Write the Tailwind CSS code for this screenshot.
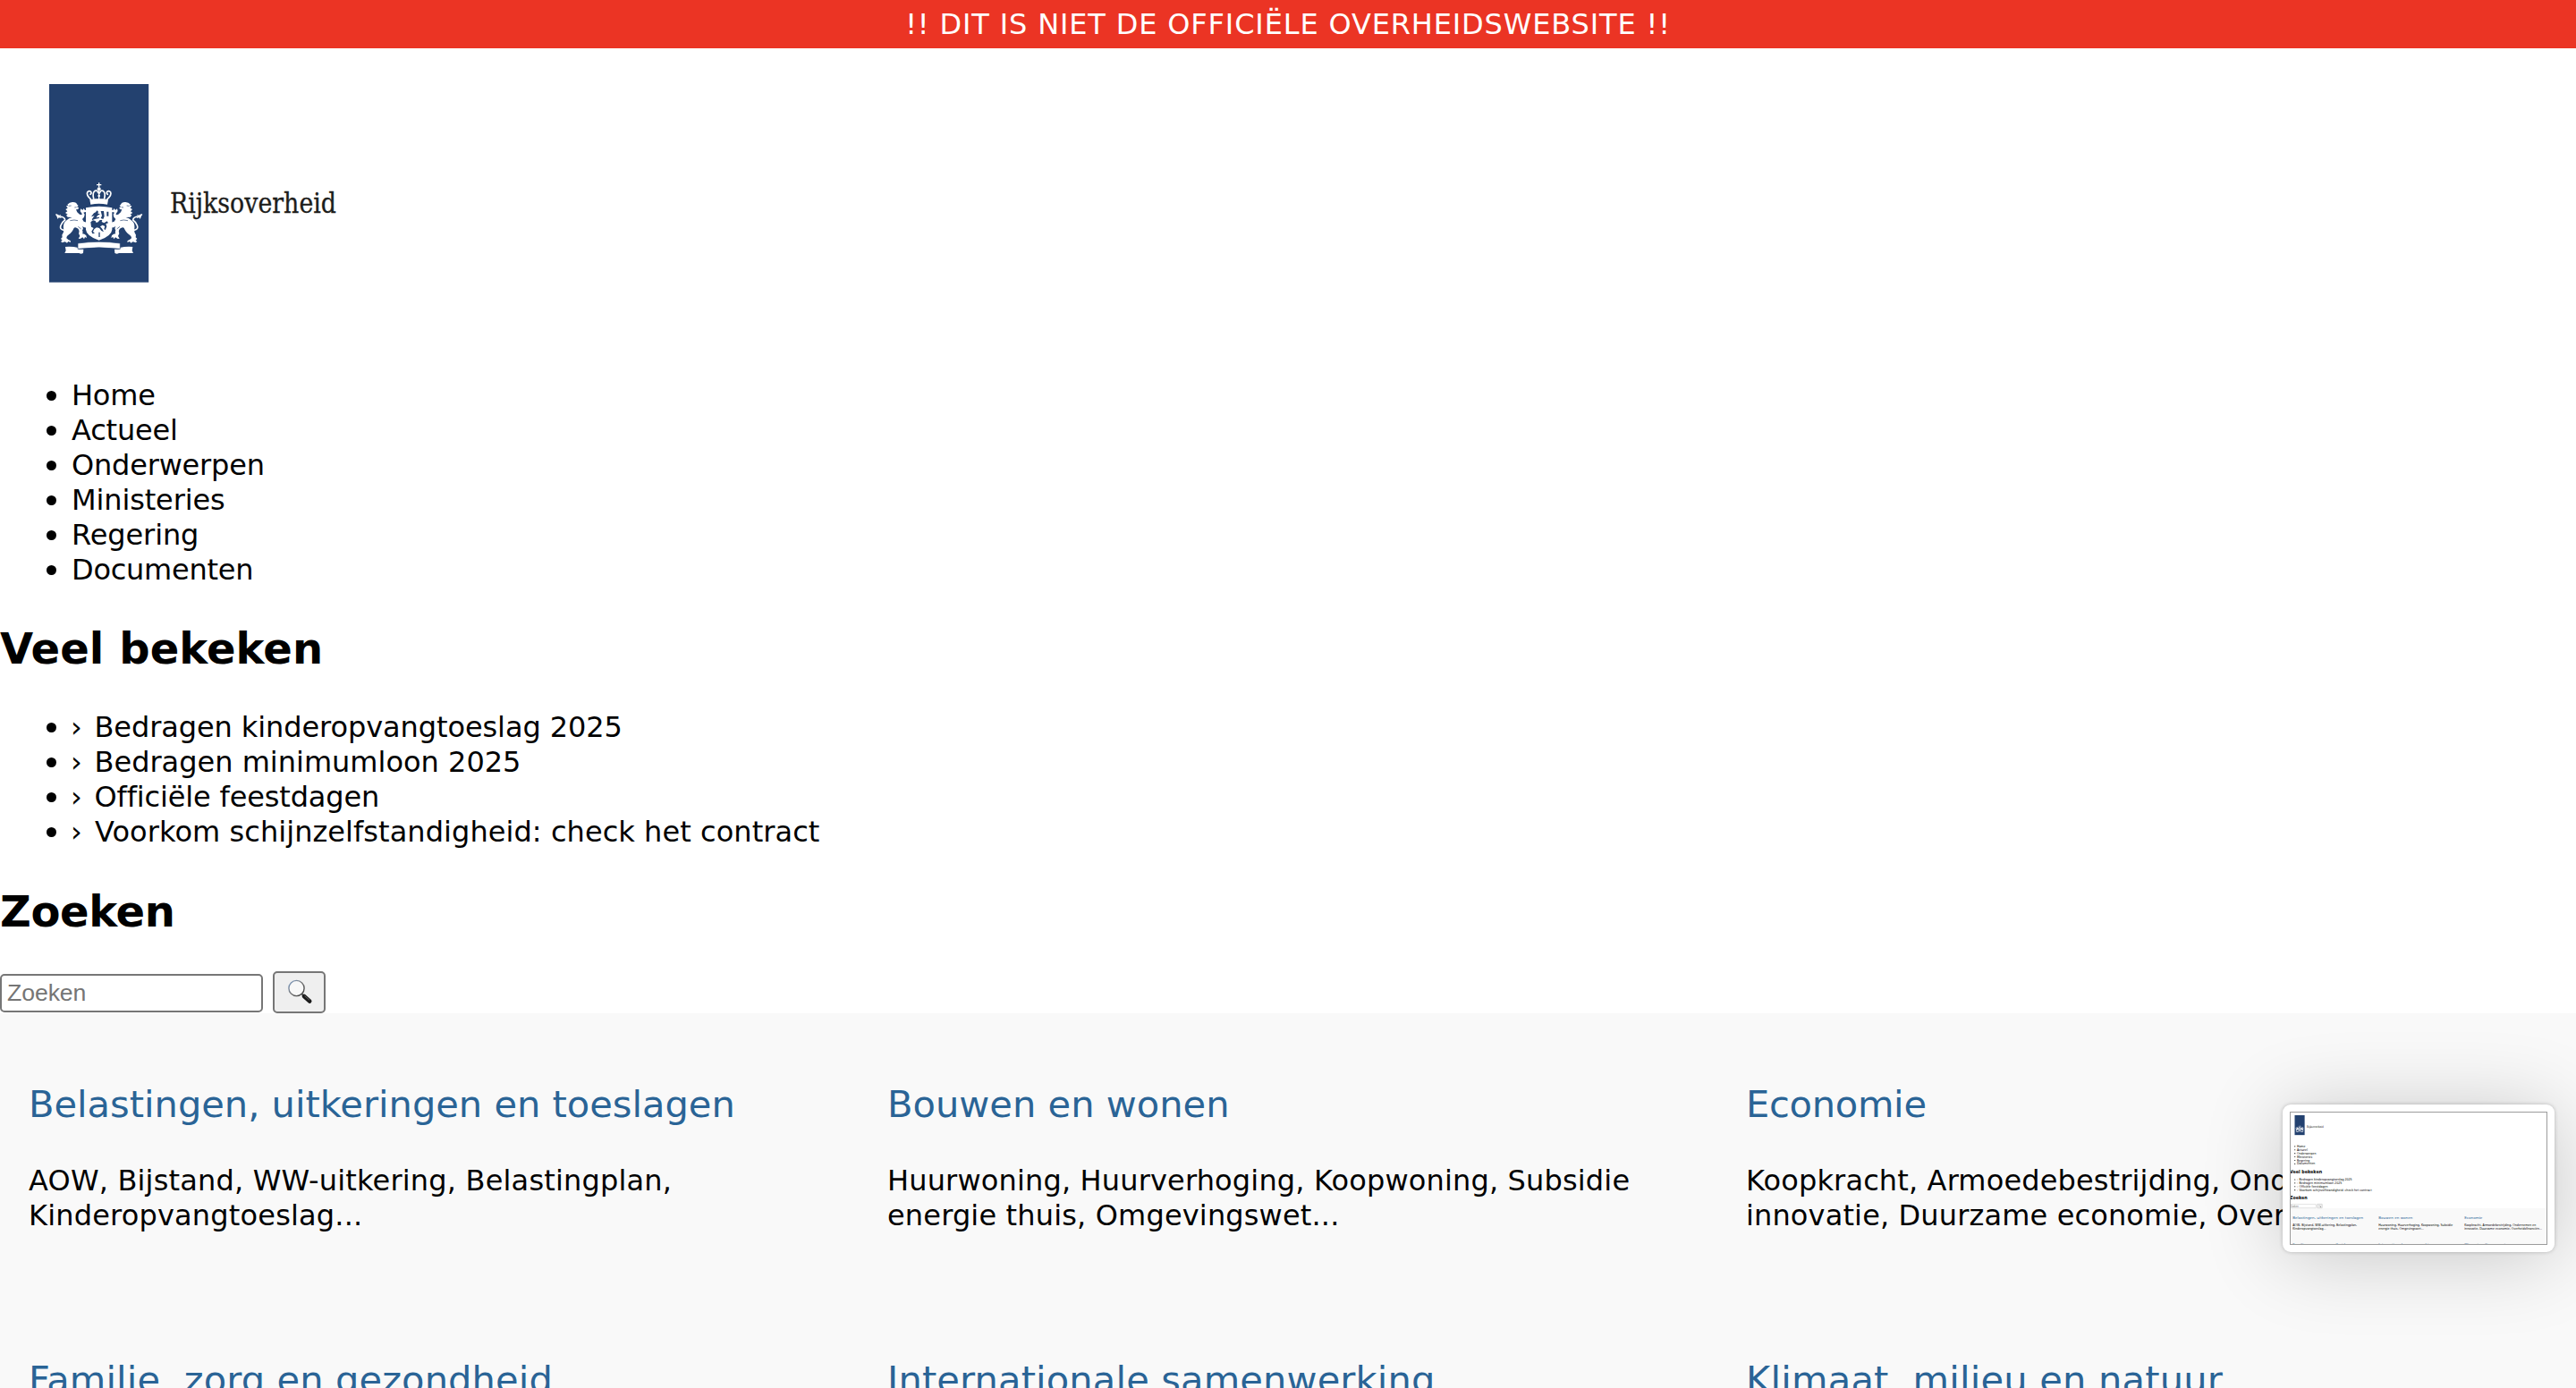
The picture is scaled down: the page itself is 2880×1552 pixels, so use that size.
<!DOCTYPE html>
<html lang="nl">
<head>
<meta charset="utf-8">
<title>Rijksoverheid</title>
<script src="https://cdn.jsdelivr.net/npm/@tailwindcss/browser@4"></script>
</head>
<body class="relative h-[1552px] w-[2880px] overflow-hidden bg-white font-['DejaVu_Sans',sans-serif] text-[32px] leading-[39px] text-black">
<div class="h-[54px] bg-[#eb3424] pt-2 text-center tracking-[0.85px] text-white">!! DIT IS NIET DE OFFICIËLE OVERHEIDSWEBSITE !!</div>

<div id="page" class="h-[1498px] w-[2880px] overflow-hidden bg-white">
  <header class="h-[369px] pt-10 pl-[55px]">
    <svg class="block h-[222px] w-[340px] overflow-visible" viewBox="0 0 340 222">
      <rect x="0" y="0" width="111.2" height="221.7" fill="#23416f"/>
      <g transform="translate(-55 -34) scale(.33333)" fill="#fff">
        <!-- crown -->
        <path d="M330 433h4v5h6v4h-6v6h-4v-6h-6v-4h6z"/>
        <circle cx="332" cy="454" r="6"/><circle cx="332" cy="467" r="4"/><circle cx="332" cy="477" r="4"/>
        <path d="M330 460h4v30h-4zM301 490q31-8 62 0l-3 16q-28-6-56 0z"/>
        <!-- shield -->
        <path fill-rule="evenodd" d="M288 517q44-9 88 0v73q-2 22-44 36q-42-14-44-36zM306 547l9-12 6-3 4-6 5 4-2 6 8 2-9 5-4 7 10-2-1 4-14 3-10 4 2-6 7-9zM338 528h10l2 18-4 9-8-3 4-8zM358 530h6v15h-6zM304 565l8-6 8 2 3 6 6-2 6-7h8l-2 6 8 4 10-6 4 6-8 3 3 9-5 12-4-4 3-9-8-4-8 5 7 8 5 10-8-4-7-9-9-2-8 6-4 8 6 6-8 1-3-8 7-11-8-4zM331 599h4v16h-4z"/>
        <g id="lion">
          <path d="M226 506q8-9 19-8 12 1 14 8l4 4-5 4 6 2-2 6-7 1 4 9 8 7 6 2q4-2 0-7l-4-6 2-8 6 5 4-6 4 6 7-1 2 9-8-2-6 2 4 6-2 9-6 7 5 8 12 4v14q-9 6-17-3 5 10 0 14 3 8 0 12l7 1 6 5 2 8-6-3-3 7-5-6-8 5-6-1 5-8-4-9q4-9-2-16-10-8-14-2-7 16-17 22-9 6-8 12l7 6 6 2 1 6-8-3-4 5-7-4-9 3-5-4 5-4-5-5 5-5-1-8q8-10 5-22-2-18 9-26 9-9 20-11l-15-1-5-6 5-3-8-5 7-5-6-7 7-4-5-7 7-2z"/>
          <path d="M214 592q-15-2-10-16 6-13 14-18-1-11-18-12l-11-6" fill="none" stroke="#fff" stroke-width="5" stroke-linecap="round"/>
          <path d="M188 540l8 4 8-4-2 7 5 5-10-2-3 5z"/>
          <path d="M219 648q22-2 44 3v5h17l-1 13q-7 5-14 0h-48l4-8z"/>
          <path d="M304 488q-15-14-11-23 5-7 12-2 3 6-2 9M314 486q-5-20 5-26 9-2 9 5" fill="none" stroke="#fff" stroke-width="5" stroke-linecap="round"/>
          <path d="M230 511l9-1M250 516l7-1M235 560q15-4 26 0M262 580l10 8" stroke="#23416f" stroke-width="2" fill="none"/>
        </g>
        <use href="#lion" transform="translate(664 0) scale(-1 1)"/>
        <!-- motto ribbon -->
        <path d="M261 636q71-10 142 0v19q-71-9-142 0z" stroke="#23416f" stroke-width="2"/>
      </g>
      <text x="135" y="143.6" font-family="DejaVu Serif Condensed, DejaVu Serif, serif" font-size="31.5" fill="#1d1d1b" stroke="#1d1d1b" stroke-width=".3" textLength="186" lengthAdjust="spacingAndGlyphs">Rijksoverheid</text>
    </svg>
  </header>

  <ul class="pl-20">
    <li class="flex items-center gap-[17px] -ml-7"><span class="size-[11px] rounded-full bg-black"></span><span class="tracking-[-0.2px]">Home</span></li>
    <li class="flex items-center gap-[17px] -ml-7"><span class="size-[11px] rounded-full bg-black"></span><span class="tracking-[-0.19px]">Actueel</span></li>
    <li class="flex items-center gap-[17px] -ml-7"><span class="size-[11px] rounded-full bg-black"></span><span class="tracking-[-0.2px]">Onderwerpen</span></li>
    <li class="flex items-center gap-[17px] -ml-7"><span class="size-[11px] rounded-full bg-black"></span><span class="tracking-[-0.13px]">Ministeries</span></li>
    <li class="flex items-center gap-[17px] -ml-7"><span class="size-[11px] rounded-full bg-black"></span><span class="tracking-[-0.1px]">Regering</span></li>
    <li class="flex items-center gap-[17px] -ml-7"><span class="size-[11px] rounded-full bg-black"></span><span class="tracking-[-0.25px]">Documenten</span></li>
  </ul>

  <h2 class="mt-[39px] text-[48px] leading-[58px] font-bold tracking-[0.08px]">Veel bekeken</h2>
  <ul class="mt-10 pl-20">
    <li class="flex items-center -ml-7"><span class="size-[11px] rounded-full bg-black"></span><span class="ml-4 w-[26.5px]">›</span><span class="tracking-[-0.09px]">Bedragen kinderopvangtoeslag 2025</span></li>
    <li class="flex items-center -ml-7"><span class="size-[11px] rounded-full bg-black"></span><span class="ml-4 w-[26.5px]">›</span><span>Bedragen minimumloon 2025</span></li>
    <li class="flex items-center -ml-7"><span class="size-[11px] rounded-full bg-black"></span><span class="ml-4 w-[26.5px]">›</span><span class="tracking-[-0.15px]">Officiële feestdagen</span></li>
    <li class="flex items-center -ml-7"><span class="size-[11px] rounded-full bg-black"></span><span class="ml-4 w-[27px]">›</span><span class="tracking-[0.06px]">Voorkom schijnzelfstandigheid: check het contract</span></li>
  </ul>

  <h2 class="mt-10 text-[48px] leading-[58px] font-bold tracking-[-0.35px]">Zoeken</h2>
  <form class="mt-[38px] flex h-[47px] items-start">
    <input type="text" placeholder="Zoeken" class="mt-[3px] h-[43px] w-[294px] rounded-[5px] border-2 border-[#767676] bg-white px-[6px] font-['Liberation_Sans',sans-serif] text-[26.67px] leading-[31px] tracking-[-0.1px] placeholder:text-[#757575]">
    <button type="button" class="ml-[11px] flex h-[47px] w-[59px] items-center justify-center rounded-[5px] border-2 border-[#767676] bg-[#efefef] pb-[2px]">
      <svg class="size-[30px]" viewBox="0 0 30 30">
        <defs>
          <linearGradient id="rim" x1="0" y1="0" x2="1" y2="1"><stop offset="0" stop-color="#7f9fc8"/><stop offset=".5" stop-color="#777"/><stop offset="1" stop-color="#333"/></linearGradient>
        </defs>
        <path d="M17.500 17.500l4 4" stroke="#555" stroke-width="2"/>
        <path d="M20 20l6.200 5.500" stroke="#1b1b1b" stroke-width="4.600" stroke-linecap="round"/>
        <path d="M20.500 19.500l5.500 4.700" stroke="#777" stroke-width=".8"/>
        <circle cx="11.500" cy="11" r="8.600" fill="#f8f8f8" stroke="url(#rim)" stroke-width="1.400"/>
      </svg>
    </button>
  </form>

  <section class="grid h-[700px] auto-rows-[308px] grid-cols-3 bg-[#f9f9f9] pt-[76px]">
    <article class="px-8">
      <h3 class="text-[41.6px] leading-[51px] whitespace-nowrap tracking-[-0.02px] text-[#2a6496]">Belastingen, uitkeringen en toeslagen</h3>
      <p class="mt-[41px] tracking-[0.18px] whitespace-nowrap">AOW, Bijstand, WW-uitkering, Belastingplan,<br>Kinderopvangtoeslag...</p>
    </article>
    <article class="px-8">
      <h3 class="text-[41.6px] leading-[51px] whitespace-nowrap text-[#2a6496]">Bouwen en wonen</h3>
      <p class="mt-[41px] tracking-[0.16px] whitespace-nowrap">Huurwoning, Huurverhoging, Koopwoning, Subsidie<br>energie thuis, Omgevingswet...</p>
    </article>
    <article class="px-8">
      <h3 class="text-[41.6px] leading-[51px] whitespace-nowrap tracking-[-0.3px] text-[#2a6496]">Economie</h3>
      <p class="mt-[41px] tracking-[0.14px] whitespace-nowrap">Koopkracht, Armoedebestrijding, Ondernemen en<br>innovatie, Duurzame economie, Overheidsfinanciën...</p>
    </article>
    <article class="px-8">
      <h3 class="text-[41.6px] leading-[51px] whitespace-nowrap tracking-[0.1px] text-[#2a6496]">Familie, zorg en gezondheid</h3>
    </article>
    <article class="px-8">
      <h3 class="text-[41.6px] leading-[51px] whitespace-nowrap tracking-[0.13px] text-[#2a6496]">Internationale samenwerking</h3>
    </article>
    <article class="px-8">
      <h3 class="text-[41.6px] leading-[51px] whitespace-nowrap tracking-[0.2px] text-[#2a6496]">Klimaat, milieu en natuur</h3>
    </article>
  </section>
</div>

<!-- floating preview of the page -->
<div class="absolute top-[1235px] left-[2552px] h-[165px] w-[304px] rounded-[9px] bg-white p-2 shadow-[0_0_4px_rgba(0,0,0,0.22),0_6px_90px_rgba(0,0,0,0.2)]">
  <div class="relative h-[149px] w-[288px] overflow-hidden">
    <div id="preview" class="h-[1498px] w-[2880px] origin-top-left scale-[0.1]"></div>
    <div class="absolute inset-0 border border-[#9c9c9c]"></div>
  </div>
</div>
<script>
const copy = document.getElementById('page').cloneNode(true);
copy.removeAttribute('id');
copy.setAttribute('aria-hidden', 'true');
document.getElementById('preview').append(copy);
</script>
</body>
</html>
